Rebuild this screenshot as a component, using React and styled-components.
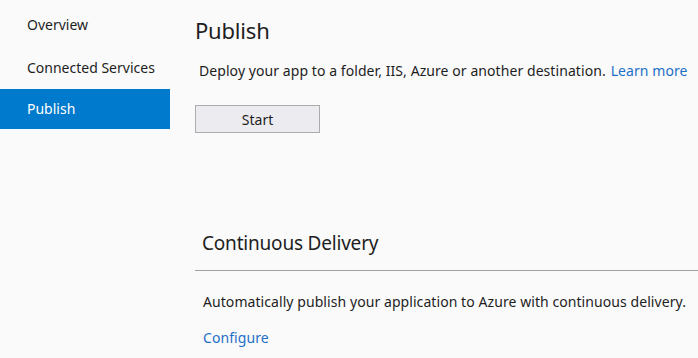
import React from "react";
import styled, { createGlobalStyle } from "styled-components";

const GlobalStyle = createGlobalStyle`
  html, body {
    margin: 0;
    padding: 0;
    background: #fafafa;
  }
  body {
    font-family: "Noto Sans", "Open Sans", sans-serif;
    color: #1e1e1e;
  }
`;

const Page = styled.div`
  display: flex;
  width: 698px;
  height: 358px;
  overflow: hidden;
  background: #fafafa;
`;

const Sidebar = styled.nav`
  width: 170px;
  flex-shrink: 0;
  padding-top: 3px;
  display: flex;
  flex-direction: column;
`;

const NavItem = styled.div`
  height: ${(p) => (p.active ? "40px" : "43px")};
  line-height: ${(p) => (p.active ? "40px" : "43px")};
  padding-left: 27px;
  font-size: 14px;
  color: ${(p) => (p.active ? "#ffffff" : "#1e1e1e")};
  background: ${(p) => (p.active ? "#007acc" : "transparent")};
`;

const Main = styled.main`
  flex: 1;
  padding-left: 25px;
  display: flex;
  flex-direction: column;
`;

const Title = styled.h1`
  margin: 16px 0 0;
  font-size: 22px;
  font-weight: 400;
  line-height: 28px;
  letter-spacing: -0.2px;
`;

const Description = styled.p`
  margin: 17px 0 0 4px;
  font-size: 14px;
  line-height: 20px;
  letter-spacing: 0.07px;
  white-space: nowrap;
`;

const Link = styled.a`
  color: #1e6fc7;
  text-decoration: none;
  margin-left: ${(p) => (p.inline ? "5px" : "0")};
  cursor: pointer;
`;

const Button = styled.button`
  margin-top: 24px;
  width: 125px;
  height: 28px;
  background: #ececf0;
  border: 1px solid #acacac;
  font-family: inherit;
  font-size: 14px;
  color: #1e1e1e;
  padding: 0;
  cursor: pointer;
`;

const Section = styled.section`
  margin-top: 97px;
  display: flex;
  flex-direction: column;
`;

const SectionTitle = styled.h2`
  margin: 0;
  padding: 0 0 14px 7px;
  font-size: 19px;
  font-weight: 400;
  line-height: 26px;
  letter-spacing: -0.2px;
  border-bottom: 1px solid #a0a0a0;
`;

const SectionText = styled.p`
  margin: 21px 0 0 8px;
  font-size: 14px;
  line-height: 20px;
  letter-spacing: 0.07px;
  white-space: nowrap;
`;

const SectionLink = styled.div`
  margin: 16px 0 0 8px;
  font-size: 14px;
  line-height: 20px;
  letter-spacing: 0.07px;
`;

export default function App() {
  return (
    <>
      <GlobalStyle />
      <Page>
        <Sidebar>
          <NavItem>Overview</NavItem>
          <NavItem>Connected Services</NavItem>
          <NavItem active>Publish</NavItem>
        </Sidebar>
        <Main>
          <Title>Publish</Title>
          <Description>
            Deploy your app to a folder, IIS, Azure or another destination.
            <Link inline>Learn more</Link>
          </Description>
          <div>
            <Button>Start</Button>
          </div>
          <Section>
            <SectionTitle>Continuous Delivery</SectionTitle>
            <SectionText>
              Automatically publish your application to Azure with continuous
              delivery.
            </SectionText>
            <SectionLink>
              <Link>Configure</Link>
            </SectionLink>
          </Section>
        </Main>
      </Page>
    </>
  );
}
